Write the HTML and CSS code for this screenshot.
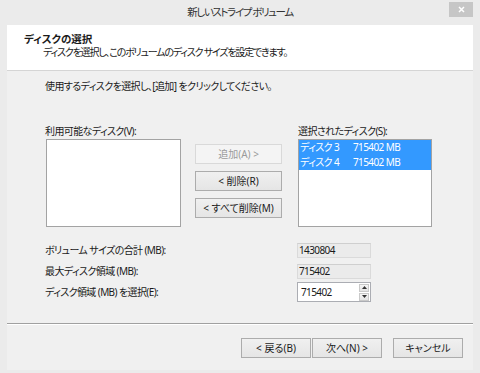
FILE: index.html
```html
<!DOCTYPE html>
<html lang="ja">
<head>
<meta charset="utf-8">
<title>新しいストライプ ボリューム</title>
<link rel="stylesheet" href="styles.css">
</head>
<body>
<div class="window">
  <div class="titlebar">
    <span class="tb-spacer"></span>
    <span class="title">新しいストライプ ボリューム</span>
    <span class="tb-right"><span class="close"><svg width="7" height="7" viewBox="0 0 7 7"><path d="M1 1L6 6M6 1L1 6" stroke="#fff" stroke-width="1.5"/></svg></span></span>
  </div>
  <div class="client">
    <div class="header">
      <div class="h-title">ディスクの選択</div>
      <div class="h-sub">ディスクを選択し、このボリュームのディスク サイズを設定できます。</div>
    </div>
    <div class="main">
      <p class="instr">使用するディスクを選択し、[追加] をクリックしてください。</p>
      <div class="lists">
        <div class="col-left">
          <div class="label">利用可能なディスク(V):</div>
          <div class="listbox listbox-left"></div>
        </div>
        <div class="mid-buttons">
          <button class="btn btn-mid" disabled>追加(A) &gt;</button>
          <button class="btn btn-mid">&lt; 削除(R)</button>
          <button class="btn btn-mid">&lt; すべて削除(M)</button>
        </div>
        <div class="col-right">
          <div class="label">選択されたディスク(S):</div>
          <div class="listbox listbox-right">
            <div class="item selected"><span>ディスク 3</span><span>715402 MB</span></div>
            <div class="item selected"><span>ディスク 4</span><span>715402 MB</span></div>
          </div>
        </div>
      </div>
      <div class="fields">
        <div class="f-label">ボリューム サイズの合計 (MB):</div>
        <div class="f-value"><span class="readonly">1430804</span></div>
        <div class="f-label">最大ディスク領域 (MB):</div>
        <div class="f-value"><span class="readonly">715402</span></div>
        <div class="f-label">ディスク領域 (MB) を選択(E):</div>
        <div class="f-value">
          <span class="spin">
            <span class="spin-text">715402</span>
            <span class="spin-btns">
              <span class="spin-btn"><svg width="5" height="3" viewBox="0 0 5 3"><path d="M0 3L2.5 0L5 3Z" fill="#333"/></svg></span>
              <span class="spin-btn"><svg width="5" height="3" viewBox="0 0 5 3"><path d="M0 0L2.5 3L5 0Z" fill="#333"/></svg></span>
            </span>
          </span>
        </div>
      </div>
    </div>
    <div class="sep"></div>
    <div class="footer">
      <button class="btn btn-foot">&lt; 戻る(B)</button>
      <button class="btn btn-foot">次へ(N) &gt;</button>
      <button class="btn btn-foot btn-cancel">キャンセル</button>
    </div>
  </div>
</div>
</body>
</html>
```
FILE: styles.css
```css
* { box-sizing: border-box; }
html, body { margin: 0; padding: 0; }
body {
  width: 480px;
  height: 373px;
  overflow: hidden;
  background: #ebebeb;
  font-family: "Noto Sans", "Noto Sans CJK JP", sans-serif;
  font-size: 10px;
  letter-spacing: -0.6px;
  font-feature-settings: "palt";
  color: #1a1a1a;
}
.window {
  width: 480px;
  height: 373px;
  display: flex;
  flex-direction: column;
}
.titlebar {
  height: 25px;
  display: grid;
  grid-template-columns: 1fr auto 1fr;
  align-items: start;
}
.title {
  font-size: 10.5px;
  letter-spacing: -1.4px;
  line-height: 25px;
  color: #333;
}
.tb-right {
  display: flex;
  justify-content: flex-end;
  padding-right: 7px;
  padding-top: 2px;
}
.close {
  width: 24px;
  height: 15px;
  background: #c6c6c6;
  display: flex;
  align-items: center;
  justify-content: center;
}
.client {
  flex: 1;
  margin: 0 7px 3px;
  background: #f0f0f0;
  display: flex;
  flex-direction: column;
}
.header {
  height: 46px;
  background: #fff;
  border-bottom: 1px solid #d5d5d5;
  padding: 7px 0 0 17px;
}
.h-title {
  font-weight: bold;
  font-size: 10.5px;
  line-height: 14px;
  letter-spacing: 0;
}
.h-sub {
  line-height: 13px;
  padding-left: 19px;
  letter-spacing: -1.2px;
}
.main {
  height: 252px;
  padding-left: 38px;
}
.instr {
  margin: 0;
  padding-top: 8px;
  line-height: 14px;
}
.lists {
  margin-top: 31px;
  display: flex;
  align-items: flex-start;
}
.label {
  line-height: 14px;
  margin-bottom: 1px;
}
.listbox {
  height: 88px;
  background: #fff;
  border: 1px solid #a3a3a3;
}
.listbox-left {
  width: 135px;
  margin-left: 1px;
}
.mid-buttons {
  margin: 20px 0 0 14px;
  display: flex;
  flex-direction: column;
  gap: 7px;
}
.col-right {
  margin-left: 16px;
}
.listbox-right {
  width: 134px;
}
.item {
  height: 15px;
  line-height: 15px;
  display: grid;
  grid-template-columns: 53px 1fr;
  padding-left: 1px;
}
.item.selected {
  background: #3399ff;
  color: #fff;
}
.btn {
  font: inherit;
  height: 20px;
  padding: 0;
  border: 1px solid #acacac;
  background: linear-gradient(#f0f0f0, #e5e5e5);
  color: #1a1a1a;
  line-height: 18px;
}
.btn:disabled {
  border-color: #d9d9d9;
  background: #f4f4f4;
  color: #9a9a9a;
}
.btn-mid {
  width: 87px;
}
.fields {
  margin-top: 13px;
  display: grid;
  grid-template-columns: 252px 74px;
  grid-auto-rows: 20px;
  row-gap: 1px;
}
.f-label {
  line-height: 20px;
}
.f-value {
  display: flex;
  align-items: center;
}
.readonly {
  width: 74px;
  height: 15px;
  line-height: 13px;
  background: #ebebeb;
  border: 1px solid #dadada;
  border-top-color: #cfcfcf;
  padding-left: 1px;
}
.spin {
  width: 74px;
  height: 20px;
  background: #fff;
  border: 1px solid #abadb3;
  display: flex;
  align-items: center;
  justify-content: space-between;
}
.spin-text {
  padding-left: 3px;
  line-height: 18px;
}
.spin-btns {
  display: flex;
  flex-direction: column;
  gap: 1px;
  margin-right: 1px;
}
.spin-btn {
  width: 10px;
  height: 8px;
  border: 1px solid #c9c9c9;
  background: linear-gradient(#f5f5f5, #e3e3e3);
  display: flex;
  align-items: center;
  justify-content: center;
}
.sep {
  height: 2px;
  border-top: 1px solid #a0a0a0;
  border-bottom: 1px solid #fff;
}
.footer {
  padding: 13px 10px 0 0;
  display: flex;
  justify-content: flex-end;
  gap: 1px;
}
.btn-foot {
  width: 70px;
}
.btn-cancel {
  margin-left: 10px;
}
```
